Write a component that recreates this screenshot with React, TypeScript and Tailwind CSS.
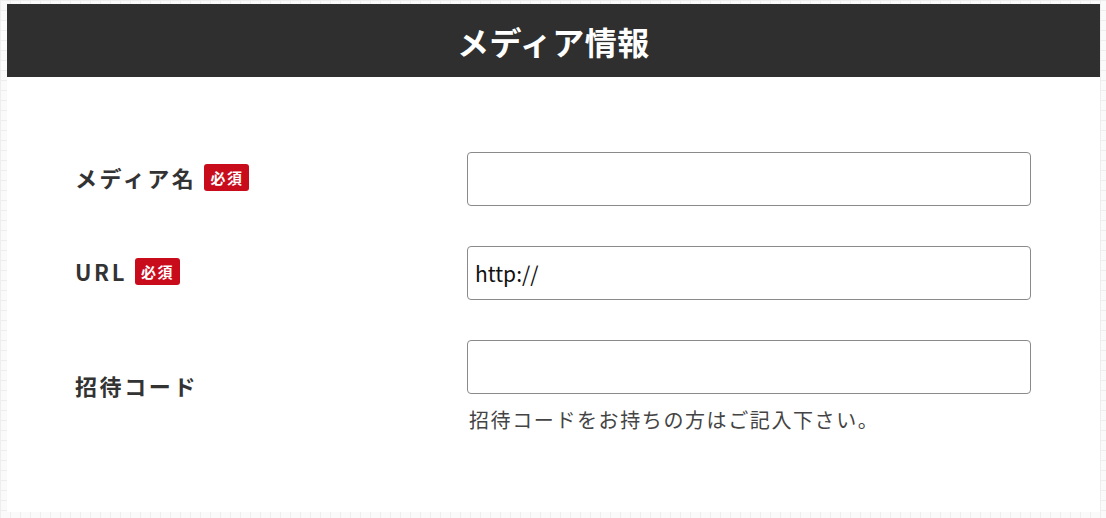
import React from "react";

const font = { fontFamily: '"Noto Sans CJK JP", "Noto Sans", sans-serif' };

function Badge() {
  return (
    <span className="ml-[8px] inline-flex h-[27px] items-center rounded-[3px] bg-[#c90c1c] px-[6px] text-[15px] font-bold leading-none tracking-[1.5px] text-white">
      必須
    </span>
  );
}

function Row({
  label,
  required,
  value,
  help,
}: {
  label: string;
  required?: boolean;
  value?: string;
  help?: string;
}) {
  return (
    <div className="flex items-center">
      <div className="flex w-[392px] shrink-0 items-center pb-[4px]">
        <span className="text-[22px] font-bold tracking-[2.6px] text-[#333]">{label}</span>
        {required && <Badge />}
      </div>
      <div className="flex flex-1 flex-col">
        <input
          defaultValue={value}
          className="h-[54px] w-full rounded-[4px] border border-[#8a8a8a] bg-white px-[7px] text-[21px] text-[#111] outline-none"
          style={font}
        />
        {help && (
          <p className="mt-[12px] pl-[2px] text-[20px] leading-[28px] tracking-[1.6px] text-[#444]">{help}</p>
        )}
      </div>
    </div>
  );
}

export default function App() {
  return (
    <div
      className="h-[518px] w-[1106px] bg-[#fafafa] bg-[image:linear-gradient(#eeeeee_1px,transparent_1px),linear-gradient(90deg,#eeeeee_1px,transparent_1px)] bg-[size:10px_10px] pt-[4px] pl-[7px] pr-[6px]"
      style={font}
    >
      <div className="h-[508px] bg-white">
        <div className="flex h-[73px] items-center justify-center bg-[#2f2f2f]">
          <h1 className="text-[32px] font-bold tracking-[0.5px] text-white">メディア情報</h1>
        </div>
        <div className="flex flex-col gap-[40px] pl-[68px] pr-[69px] pt-[75px]">
          <Row label="メディア名" required />
          <Row label="URL" required value="http://" />
          <Row label="招待コード" help="招待コードをお持ちの方はご記入下さい。" />
        </div>
      </div>
    </div>
  );
}
